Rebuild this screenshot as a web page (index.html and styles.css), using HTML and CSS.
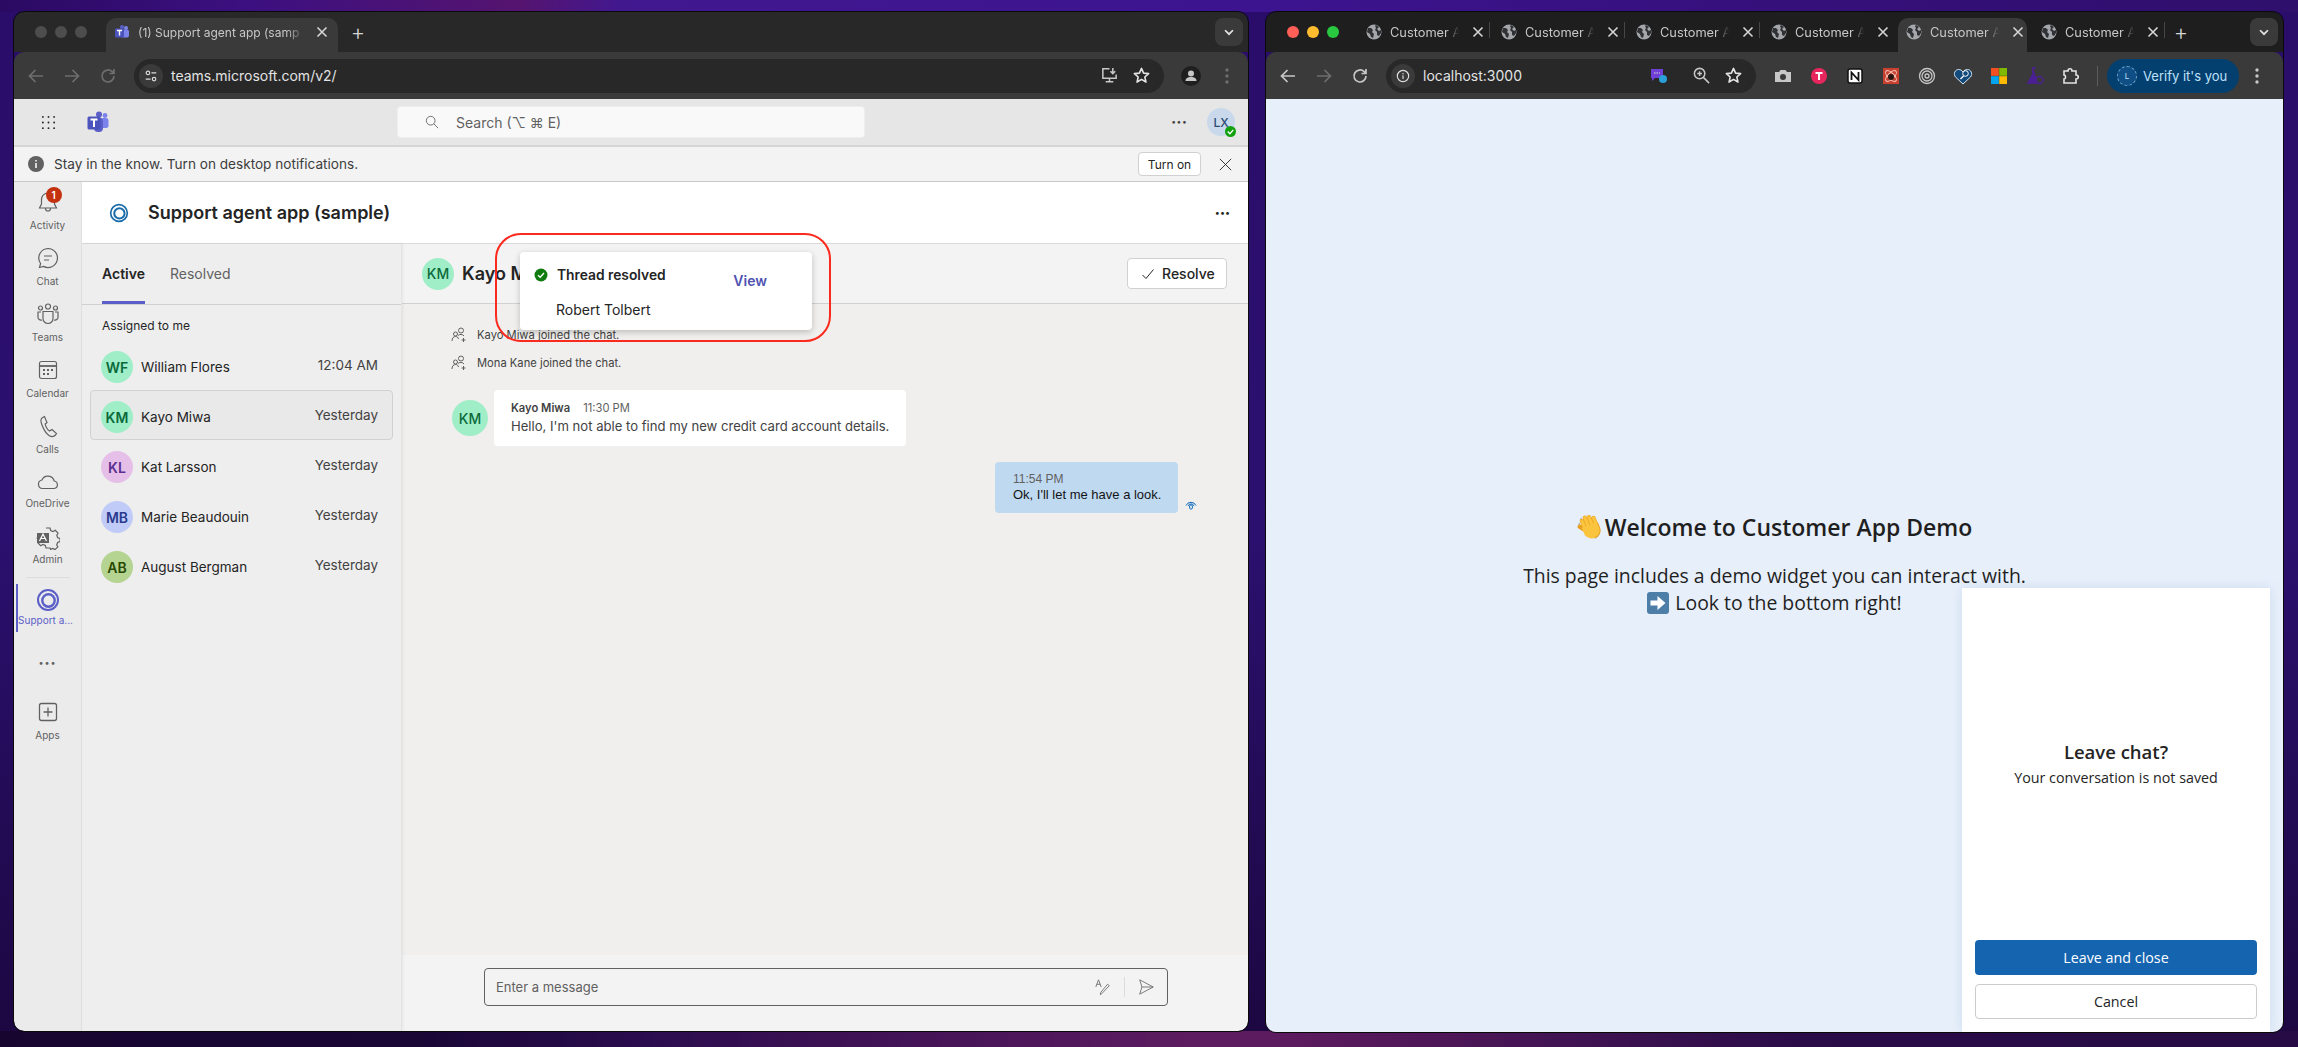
FILE: index.html
```html
<!DOCTYPE html>
<html lang="en">
<head>
<meta charset="UTF-8">
<title>Support agent app (sample)</title>
<link rel="stylesheet" href="styles.css">
</head>
<body>
<svg class="defs" width="0" height="0">
  <symbol id="globe" viewBox="0 0 16 16">
    <circle cx="8" cy="8" r="7.500" fill="#a3a7ab"/>
    <path d="M2 4l3 0 2 2-1 2 2 2-1 4-2-1-1-3-3-2zM10 1l3 2-2 2 2 2 2-1 0 3-2 3-2-1 0-3-2-2 1-2-1-2z" fill="#303134"/>
  </symbol>
  <symbol id="close" viewBox="0 0 16 16">
    <path d="M3.500 3.500l9 9M12.500 3.500l-9 9" fill="none" stroke="currentColor" stroke-width="1.600"/>
  </symbol>
  <symbol id="star" viewBox="0 0 20 20">
    <path d="M10 2.500l2.200 5 5.300.5-4 3.600 1.200 5.300L10 14.100l-4.700 2.800 1.200-5.300-4-3.600 5.300-.5z" fill="none" stroke="currentColor" stroke-width="1.700" stroke-linejoin="round"/>
  </symbol>
  <symbol id="back" viewBox="0 0 20 20">
    <path d="M17 10H4M9.500 4L3.500 10l6 6" fill="none" stroke="currentColor" stroke-width="1.700"/>
  </symbol>
  <symbol id="forward" viewBox="0 0 20 20">
    <path d="M3 10h13M10.500 4l6 6-6 6" fill="none" stroke="currentColor" stroke-width="1.700"/>
  </symbol>
  <symbol id="reload" viewBox="0 0 20 20">
    <path d="M16 10a6 6 0 1 1-1.800-4.300L16 7.500M16 3v4.500h-4.500" fill="none" stroke="currentColor" stroke-width="1.700"/>
  </symbol>
  <symbol id="kebab" viewBox="0 0 20 20">
    <circle cx="10" cy="4" r="1.700" fill="currentColor"/><circle cx="10" cy="10" r="1.700" fill="currentColor"/><circle cx="10" cy="16" r="1.700" fill="currentColor"/>
  </symbol>
  <symbol id="chevron" viewBox="0 0 16 16">
    <path d="M3.500 6l4.500 4.500L12.500 6" fill="none" stroke="currentColor" stroke-width="2"/>
  </symbol>
  <symbol id="joined" viewBox="0 0 16 16">
    <circle cx="10" cy="3.500" r="2.500" fill="none" stroke="#616161"/>
    <circle cx="4.500" cy="7" r="2" fill="none" stroke="#616161"/>
    <path d="M1 14c0-3 1.500-4.500 3.500-4.500S7 10.500 7.500 12M7 8.500c1-1.500 5-1.500 6 0.500M12.500 11v4M10.500 13h4" fill="none" stroke="#616161"/>
  </symbol>
  <symbol id="ring" viewBox="0 0 24 24">
    <circle cx="12" cy="12" r="10" fill="none" stroke="currentColor" stroke-width="2"/>
    <circle cx="12.500" cy="12.500" r="6.200" fill="none" stroke="currentColor" stroke-width="2.400"/>
  </symbol>
</svg>

<div class="window window-teams">
  <div class="tabstrip">
    <div class="lights"><i class="light"></i><i class="light"></i><i class="light"></i></div>
    <div class="tab tab-single">
      <svg class="tab-icon" viewBox="0 0 16 16"><circle cx="12" cy="4" r="2" fill="#7b83eb"/><circle cx="8" cy="3" r="2" fill="#5b5fc7"/><rect x="7" y="5.500" width="8" height="8" rx="2" fill="#7b83eb"/><rect x="1" y="4.500" width="9" height="9" rx="1" fill="#4b53bc"/><path d="M3 6.500h5M5.500 6.500v5" stroke="#fff" stroke-width="1.400"/></svg>
      <span class="tab-title">(1) Support agent app (samp</span>
      <svg class="tab-close"><use href="#close"/></svg>
    </div>
    <span class="tab-plus">+</span>
    <span class="tab-menu"><svg><use href="#chevron"/></svg></span>
  </div>
  <div class="toolbar">
    <span class="tool dim"><svg><use href="#back"/></svg></span>
    <span class="tool dim"><svg><use href="#forward"/></svg></span>
    <span class="tool dim"><svg><use href="#reload"/></svg></span>
    <div class="address address-teams">
      <span class="site-chip">
        <svg viewBox="0 0 16 16"><circle cx="4.500" cy="4.500" r="2" fill="none" stroke="#ddd" stroke-width="1.300"/><path d="M8.500 4.500H14M2 11.500h5.500" stroke="#ddd" stroke-width="1.300"/><circle cx="11.500" cy="11.500" r="2" fill="none" stroke="#ddd" stroke-width="1.300"/></svg>
      </span>
      <span class="url">teams.microsoft.com/v2/</span>
      <span class="address-end">
        <span class="tool-sm"><svg viewBox="0 0 20 20"><path d="M10 3H3v10h14V9M6 16.500h8M10 13v3.500M13.500 2v6M11 5.500l2.500 2.500L16 5.500" fill="none" stroke="#c7c7c7" stroke-width="1.600"/></svg></span>
        <span class="tool-sm"><svg><use href="#star"/></svg></span>
      </span>
    </div>
    <span class="tool person"><svg viewBox="0 0 20 20"><circle cx="10" cy="10" r="10" fill="#1f1f1f"/><circle cx="10" cy="7.500" r="3" fill="#c7c7c7"/><path d="M4.500 15c0-3 2.500-4 5.500-4s5.500 1 5.500 4z" fill="#c7c7c7"/></svg></span>
    <span class="tool dim"><svg><use href="#kebab"/></svg></span>
  </div>

  <div class="teams">
    <div class="topbar">
      <div class="topbar-left">
        <svg class="waffle" viewBox="0 0 16 16" fill="#242424"><circle cx="2" cy="2" r="1"/><circle cx="8" cy="2" r="1"/><circle cx="14" cy="2" r="1"/><circle cx="2" cy="8" r="1"/><circle cx="8" cy="8" r="1"/><circle cx="14" cy="8" r="1"/><circle cx="2" cy="14" r="1"/><circle cx="8" cy="14" r="1"/><circle cx="14" cy="14" r="1"/></svg>
        <svg class="teams-logo" viewBox="0 0 22 22"><circle cx="18" cy="4.500" r="2.400" fill="#7b83eb"/><circle cx="12" cy="3.500" r="3" fill="#5b5fc7"/><rect x="10" y="7" width="11.500" height="10" rx="2.500" fill="#7b83eb"/><rect x="7" y="7" width="9" height="14" rx="4" fill="#5b5fc7"/><rect x="0.500" y="5.500" width="13" height="13" rx="1.500" fill="#4b53bc"/><path d="M3.500 8.500h7M7 8.500v7.500" stroke="#fff" stroke-width="2"/></svg>
      </div>
      <div class="search">
        <svg viewBox="0 0 16 16"><circle cx="6.500" cy="6.500" r="5" fill="none" stroke="#616161"/><path d="M10 10l5 5" stroke="#616161"/></svg>
        <span>Search (⌥ ⌘ E)</span>
      </div>
      <div class="topbar-right">
        <span class="top-dots">···</span>
        <span class="me">LX<i class="me-status"><svg viewBox="0 0 10 10"><path d="M2.500 5l2 2 3-3.500" fill="none" stroke="#fff" stroke-width="1.200"/></svg></i></span>
      </div>
    </div>

    <div class="banner">
      <svg class="banner-icon" viewBox="0 0 16 16"><circle cx="8" cy="8" r="8" fill="#616161"/><path d="M8 7v5M8 4v1.500" stroke="#fff" stroke-width="1.500"/></svg>
      <span class="banner-text">Stay in the know. Turn on desktop notifications.</span>
      <button class="banner-btn">Turn on</button>
      <svg class="banner-close" viewBox="0 0 16 16"><path d="M1 1l14 14M15 1L1 15" fill="none" stroke="#242424" stroke-width="1.100"/></svg>
    </div>

    <div class="workspace">
      <nav class="rail">
        <div class="rail-item">
          <span class="rail-icon">
            <svg viewBox="0 0 24 24" fill="none" stroke="#616161" stroke-width="1.200"><path d="M12 3a6.500 6.500 0 0 0-6.500 6.500V14L3.500 18h17l-2-4V9.500A6.500 6.500 0 0 0 12 3zM9.500 18.500a2.500 2.500 0 0 0 5 0"/></svg>
            <b class="badge">1</b>
          </span>
          <span class="rail-label">Activity</span>
        </div>
        <div class="rail-item">
          <span class="rail-icon"><svg viewBox="0 0 24 24" fill="none" stroke="#616161" stroke-width="1.200"><path d="M12 2.500a9.500 9.500 0 1 1-4.500 17.900L3.500 21.500l1.100-4A9.500 9.500 0 0 1 12 2.500zM8 10h8M8 14h5"/></svg></span>
          <span class="rail-label">Chat</span>
        </div>
        <div class="rail-item">
          <span class="rail-icon"><svg viewBox="0 0 24 24" fill="none" stroke="#616161" stroke-width="1.200"><circle cx="12" cy="4.500" r="2.500"/><circle cx="4.500" cy="6" r="2"/><circle cx="19.500" cy="6" r="2"/><path d="M7 9.500h10v7a5 5 0 0 1-10 0zM5 10H2v5a3 3 0 0 0 4 3M19 10h3v5a3 3 0 0 1-4 3"/></svg></span>
          <span class="rail-label">Teams</span>
        </div>
        <div class="rail-item">
          <span class="rail-icon"><svg viewBox="0 0 24 24" fill="none" stroke="#616161" stroke-width="1.200"><rect x="3.500" y="3.500" width="17" height="17" rx="2"/><path d="M3.500 8h17" stroke-width="1.800"/><path d="M7 12h2M11 12h2M15 12h2M7 16h2M11 16h2" stroke-width="1.800"/></svg></span>
          <span class="rail-label">Calendar</span>
        </div>
        <div class="rail-item">
          <span class="rail-icon"><svg viewBox="0 0 24 24" fill="none" stroke="#616161" stroke-width="1.200"><path d="M8.500 2.500L6 4c-1.500 1-1.500 3 0 7s4 8.500 7 10.500c2.500 1.500 5 1.200 6.500-.5l1-1.500-4.500-4-2.500 1.500c-2-1-4-4.500-4.300-7L11 8.500z"/></svg></span>
          <span class="rail-label">Calls</span>
        </div>
        <div class="rail-item rail-tight">
          <span class="rail-icon"><svg viewBox="0 0 24 24" fill="none" stroke="#616161" stroke-width="1.200"><path d="M6.500 18.500a4.300 4.300 0 0 1-.6-8.500 6.500 6.500 0 0 1 12.300 1 3.800 3.800 0 0 1 0 7.500z"/></svg></span>
          <span class="rail-label">OneDrive</span>
        </div>
        <div class="rail-item rail-tight rail-last">
          <span class="rail-icon"><svg viewBox="0 0 24 24" fill="none" stroke="#616161" stroke-width="1.200"><path d="M10 2h4l.7 2.500 2.300 1 2.300-1.200 2.700 2.900-1.200 2.200.9 2.300 2.300.8v3l-2.300.9-1 2.300 1.100 2.200-2.800 2.700-2.200-1.200-2.300 1L14 22h-4l-.7-2.500-2.300-1-2.300 1.200L2 17l1.200-2.300-1-2.300L0.500 12"/><rect x="1" y="7" width="12" height="10" fill="#616161" stroke="none"/><path d="M3.500 15l3.500-7 3.500 7M5 12.500h4" stroke="#fff"/></svg></span>
          <span class="rail-label">Admin</span>
        </div>
        <div class="rail-divider"></div>
        <div class="rail-item rail-active">
          <span class="rail-icon"><svg><use href="#ring"/></svg></span>
          <span class="rail-label">Support a...</span>
        </div>
        <div class="rail-more">•••</div>
        <div class="rail-item">
          <span class="rail-icon"><svg viewBox="0 0 24 24" fill="none" stroke="#616161" stroke-width="1.300"><rect x="3.500" y="3.500" width="17" height="17" rx="2"/><path d="M12 7.500v9M7.500 12h9"/></svg></span>
          <span class="rail-label">Apps</span>
        </div>
      </nav>

      <main class="stage">
        <header class="app-head">
          <svg class="app-logo"><use href="#ring"/></svg>
          <h1 class="app-title">Support agent app (sample)</h1>
          <span class="app-more">•••</span>
        </header>
        <div class="panes">
          <aside class="threads">
            <div class="thread-tabs">
              <span class="thread-tab thread-tab-on">Active</span>
              <span class="thread-tab">Resolved</span>
            </div>
            <div class="thread-group">Assigned to me</div>
            <div class="thread">
              <span class="who"><span class="avatar av-green">WF</span><span>William Flores</span></span>
              <span class="when">12:04 AM</span>
            </div>
            <div class="thread thread-on">
              <span class="who"><span class="avatar av-green">KM</span><span>Kayo Miwa</span></span>
              <span class="when">Yesterday</span>
            </div>
            <div class="thread">
              <span class="who"><span class="avatar av-pink">KL</span><span>Kat Larsson</span></span>
              <span class="when">Yesterday</span>
            </div>
            <div class="thread">
              <span class="who"><span class="avatar av-blue">MB</span><span>Marie Beaudouin</span></span>
              <span class="when">Yesterday</span>
            </div>
            <div class="thread">
              <span class="who"><span class="avatar av-olive">AB</span><span>August Bergman</span></span>
              <span class="when">Yesterday</span>
            </div>
          </aside>
          <section class="chat">
            <div class="chat-head">
              <span class="avatar av-mint">KM</span>
              <span class="chat-name">Kayo Miwa</span>
              <button class="resolve">
                <svg viewBox="0 0 14 14"><path d="M1.500 8l3.500 3.500 7.500-9" fill="none" stroke="#242424" stroke-width="1"/></svg>
                Resolve
              </button>
            </div>
            <div class="messages">
              <div class="sys"><svg><use href="#joined"/></svg>Kayo Miwa joined the chat.</div>
              <div class="sys"><svg><use href="#joined"/></svg>Mona Kane joined the chat.</div>
              <div class="msg-in">
                <span class="avatar avatar-lg av-mint">KM</span>
                <div class="bubble-in">
                  <div class="msg-meta"><b>Kayo Miwa</b><span>11:30 PM</span></div>
                  <div class="msg-body">Hello, I'm not able to find my new credit card account details.</div>
                </div>
              </div>
              <div class="msg-out">
                <div class="bubble-out">
                  <div class="out-time">11:54 PM</div>
                  <div>Ok, I'll let me have a look.</div>
                </div>
                <svg class="seen" viewBox="0 0 12 12"><path d="M1 6.500a5.500 5.500 0 0 1 10 0M3 7a3.200 3.200 0 0 1 6 0" fill="none" stroke="#0f6cbd"/><ellipse cx="6" cy="8" rx="1.500" ry="2.200" fill="none" stroke="#0f6cbd"/></svg>
              </div>
            </div>
            <div class="composer">
              <div class="composer-box">
                <span class="composer-hint">Enter a message</span>
                <svg class="composer-icon" viewBox="0 0 20 20"><path d="M2 10L5 2l3 8M3 7h4M9 17l-2 1.500.5-2.500L15 7l2 1.500z" fill="none" stroke="#616161" stroke-width=".9"/></svg>
                <i class="composer-sep"></i>
                <svg class="composer-icon" viewBox="0 0 20 20"><path d="M3 2l15 8-15 8 2.500-8zM5.500 10H18" fill="none" stroke="#616161" stroke-width=".9"/></svg>
              </div>
            </div>
          </section>
        </div>
      </main>
    </div>
  </div>

  <div class="callout">
    <div class="toast">
      <div class="toast-top">
        <svg class="toast-check" viewBox="0 0 14 14"><circle cx="7" cy="7" r="6.500" fill="#107c10"/><path d="M4 7.200l2.200 2.100L10 5" fill="none" stroke="#fff" stroke-width="1.300"/></svg>
        <b class="toast-title">Thread resolved</b>
        <span class="toast-link">View</span>
      </div>
      <div class="toast-name">Robert Tolbert</div>
    </div>
  </div>
</div>

<div class="window window-customer">
  <div class="tabstrip">
    <div class="lights"><i class="light light-red"></i><i class="light light-amber"></i><i class="light light-green"></i></div>
    <div class="tab-row">
      <div class="tab-cell"><svg class="tab-icon"><use href="#globe"/></svg><span class="tab-title">Customer A</span><svg class="tab-close"><use href="#close"/></svg></div>
      <div class="tab-cell"><svg class="tab-icon"><use href="#globe"/></svg><span class="tab-title">Customer A</span><svg class="tab-close"><use href="#close"/></svg></div>
      <div class="tab-cell"><svg class="tab-icon"><use href="#globe"/></svg><span class="tab-title">Customer A</span><svg class="tab-close"><use href="#close"/></svg></div>
      <div class="tab-cell tab-cell-plain"><svg class="tab-icon"><use href="#globe"/></svg><span class="tab-title">Customer A</span><svg class="tab-close"><use href="#close"/></svg></div>
      <div class="tab-cell tab-cell-on"><svg class="tab-icon"><use href="#globe"/></svg><span class="tab-title">Customer A</span><svg class="tab-close"><use href="#close"/></svg></div>
      <div class="tab-cell"><svg class="tab-icon"><use href="#globe"/></svg><span class="tab-title">Customer A</span><svg class="tab-close"><use href="#close"/></svg></div>
    </div>
    <span class="tab-plus tab-plus-right">+</span>
    <span class="tab-menu"><svg><use href="#chevron"/></svg></span>
  </div>
  <div class="toolbar">
    <span class="tool"><svg><use href="#back"/></svg></span>
    <span class="tool dim"><svg><use href="#forward"/></svg></span>
    <span class="tool"><svg><use href="#reload"/></svg></span>
    <div class="address address-customer">
      <span class="site-chip">
        <svg viewBox="0 0 16 16"><circle cx="8" cy="8" r="6.500" fill="none" stroke="#ddd" stroke-width="1.300"/><path d="M8 7v4.500M8 4.500V6" stroke="#ddd" stroke-width="1.300"/></svg>
      </span>
      <span class="url">localhost:3000</span>
      <span class="address-end">
        <svg class="ext-chat" viewBox="0 0 18 16"><path d="M1 1h12v9H5l-3 3v-3H1z" fill="#6f3fd6"/><circle cx="13" cy="11" r="4" fill="#2b9fd8"/><path d="M4 5h6" stroke="#ddd" stroke-dasharray="1.500 1"/></svg>
        <span class="tool-sm"><svg viewBox="0 0 20 20"><circle cx="8" cy="8" r="5.500" fill="none" stroke="#c7c7c7" stroke-width="1.600"/><path d="M12 12l6 6M8 5.500v5M5.500 8h5" stroke="#c7c7c7" stroke-width="1.600"/></svg></span>
        <span class="tool-sm"><svg><use href="#star"/></svg></span>
      </span>
    </div>
    <span class="tool tool-first"><svg viewBox="0 0 20 20"><path d="M2 6h4l1.500-2h5L14 6h4v10H2z" fill="#c7c7c7"/><circle cx="10" cy="11" r="3" fill="#3a3a3a"/></svg></span>
    <span class="tool"><svg viewBox="0 0 20 20"><circle cx="10" cy="10" r="8" fill="#e8265e"/><path d="M6.500 7h7M10 7v7" stroke="#fff" stroke-width="2"/></svg></span>
    <span class="tool"><svg viewBox="0 0 20 20"><rect x="3" y="3" width="14" height="14" rx="2" fill="#fff" stroke="#111" stroke-width="1.500"/><path d="M6.500 14V6.500l7 7.500V6" fill="none" stroke="#111" stroke-width="1.800"/></svg></span>
    <span class="tool"><svg viewBox="0 0 20 20"><rect x="2" y="2" width="16" height="16" fill="#c8402f"/><ellipse cx="10" cy="10" rx="7" ry="3" fill="none" stroke="#f6c9bf" transform="rotate(45 10 10)"/><ellipse cx="10" cy="10" rx="7" ry="3" fill="none" stroke="#f6c9bf" transform="rotate(-45 10 10)"/><circle cx="10" cy="11" r="3" fill="#2a1512"/></svg></span>
    <span class="tool"><svg viewBox="0 0 20 20" fill="none" stroke="#c7c7c7" stroke-width="1.300"><circle cx="10" cy="10" r="7.500"/><circle cx="10" cy="10" r="5"/><circle cx="10" cy="10" r="2"/></svg></span>
    <span class="tool"><svg viewBox="0 0 20 20"><path d="M10 18L2.500 11C0 8 2 3.500 5.500 3.500c2 0 3.500 1 4.500 2.500 1-1.500 2.500-2.500 4.500-2.500C18 3.500 20 8 17.500 11z" fill="#134a7c" stroke="#d5e4f2"/><circle cx="12.500" cy="7.500" r="2.800" fill="#134a7c" stroke="#fff"/><path d="M10.500 10l-3 3" stroke="#fff" stroke-width="1.300"/></svg></span>
    <span class="tool"><svg viewBox="0 0 20 20"><rect x="2" y="2" width="7.800" height="7.800" fill="#f25022"/><rect x="10.200" y="2" width="7.800" height="7.800" fill="#7fba00"/><rect x="2" y="10.200" width="7.800" height="7.800" fill="#00a4ef"/><rect x="10.200" y="10.200" width="7.800" height="7.800" fill="#ffb900"/></svg></span>
    <span class="tool"><svg viewBox="0 0 20 20"><path d="M7 2h4M8 2v6L3 17h10" fill="#4b1f94" stroke="#4b1f94" stroke-width="1.500"/><circle cx="14.500" cy="14" r="3.500" fill="none" stroke="#4b1f94" stroke-width="1.400"/></svg></span>
    <span class="tool"><svg viewBox="0 0 20 20"><path d="M3 5h4c0-3 4-3 4 0h4v4c3 0 3 4 0 4v4H3v-4c2 0 2-4 0-4z" fill="none" stroke="#e3e3e3" stroke-width="1.600"/></svg></span>
    <i class="tool-sep"></i>
    <div class="verify">
      <span class="verify-mark">L</span>
      <span>Verify it's you</span>
    </div>
    <span class="tool"><svg><use href="#kebab"/></svg></span>
  </div>
  <div class="page">
    <h2 class="page-title">
      <svg class="emoji-hand" viewBox="0 0 24 26">
        <path d="M1.500 13l1-4M3.500 6l1-2M22 19l-1 3M19 23l-1 1.500" stroke="#a7aeb6" stroke-width="1.200" fill="none"/>
        <g transform="rotate(-22 13 14)">
          <path d="M7 13l-3-4" stroke="#e8a020" stroke-width="4.400" stroke-linecap="round"/>
          <path d="M8 13V4.500M12 12V2.500M16 12V3.500M20 13V6" stroke="#e8a020" stroke-width="4.200" stroke-linecap="round"/>
          <path d="M8 13V4.500M12 12V2.500M16 12V3.500M20 13V6" stroke="#fbc43f" stroke-width="3.300" stroke-linecap="round"/>
          <path d="M5.500 11h16.500v6c0 5-3.500 8-8 8-4 0-6-2-8.500-6z" fill="#fbc43f"/>
          <path d="M14 25c4 0 8-3 8-8v-5" fill="none" stroke="#e8a020"/>
        </g>
      </svg>
      Welcome to Customer App Demo
    </h2>
    <p class="page-text">This page includes a demo widget you can interact with.</p>
    <p class="page-text">
      <svg class="emoji-arrow" viewBox="0 0 22 22"><rect width="22" height="22" rx="3" fill="#4d7ea8"/><path d="M3.500 8.500h7V4l8 7-8 7v-4.500h-7z" fill="#fff"/></svg>
      Look to the bottom right!
    </p>
    <aside class="widget">
      <div class="widget-title">Leave chat?</div>
      <div class="widget-sub">Your conversation is not saved</div>
      <button class="widget-btn widget-btn-main">Leave and close</button>
      <button class="widget-btn">Cancel</button>
    </aside>
  </div>
</div>
</body>
</html>
```

FILE: styles.css
```css
*{
    box-sizing: border-box;
}
html, body{
    margin: 0;
    height: 100%;
}
body{
    position: relative;
    width: 2298px;
    height: 1047px;
    overflow: hidden;
    font-family: Inter, "Liberation Sans", sans-serif;
    background:
        linear-gradient(90deg, #2a0a62 0, #3c1080 250px, #55146f 520px, #42188f 620px, #3c1490 1250px, #35107a 1800px, #2f0f6c 2298px) top / 100% 12px no-repeat,
        linear-gradient(90deg, #17052f 0, #1a0736 420px, #2a0c4e 640px, #5e1c60 1200px, #5c1b5e 1290px, #2a0c48 1800px, #260b44 2298px) bottom / 100% 16px no-repeat,
        linear-gradient(180deg, #2a0d6a 0, #2c1070 50%, #1c0740 100%);
}
.defs{
    position: absolute;
}
svg{
    display: block;
}
button{
    font-family: inherit;
    cursor: pointer;
}

/* desktop windows */
.window{
    position: absolute;
    top: 12px;
    display: flex;
    flex-direction: column;
    border-radius: 10px;
    overflow: hidden;
    outline: 1px solid #0a0a0a;
}
.window-teams{
    left: 14px;
    width: 1234px;
    height: 1019px;
    --strip: #282828;
}
.window-customer{
    left: 1266px;
    width: 1017px;
    height: 1020px;
    --strip: #1e1e1e;
}

/* browser chrome */
.tabstrip{
    display: flex;
    align-items: flex-end;
    flex: none;
    height: 40px;
    padding: 0 5px 0 21px;
    background: var(--strip);
    color: #c7c7c7;
    font-size: 14px;
}
.lights{
    display: flex;
    align-self: center;
    gap: 8px;
}
.light{
    width: 12px;
    height: 12px;
    border-radius: 50%;
    background: #4d4d4d;
}
.light-red{ background: #ff5f57; }
.light-amber{ background: #febc2e; }
.light-green{ background: #28c840; }
.tab{
    display: flex;
    align-items: center;
    gap: 8px;
    height: 34px;
    padding: 0 8px 6px;
    border-radius: 10px 10px 0 0;
    background: #3a3a3a;
}
.tab-single{
    width: 232px;
    margin-left: 19px;
}
.tab-icon{
    flex: none;
    width: 16px;
    height: 16px;
}
.tab-title{
    flex: 1;
    min-width: 0;
    overflow: hidden;
    white-space: nowrap;
    font-size: 12px;
    -webkit-mask-image: linear-gradient(90deg, #000 88%, transparent 100%);
    mask-image: linear-gradient(90deg, #000 88%, transparent 100%);
}
.tab-cell .tab-title{
    font-size: 12.800px;
    flex: none;
    width: 72px;
    -webkit-mask-image: linear-gradient(90deg, #000 78%, transparent 96%);
    mask-image: linear-gradient(90deg, #000 78%, transparent 96%);
}
.tab-close{
    flex: none;
    width: 16px;
    height: 16px;
    color: #d5d5d5;
}
.tab-plus{
    align-self: center;
    width: 20px;
    margin-left: 10px;
    text-align: center;
    font-size: 22px;
    line-height: 24px;
    font-weight: 300;
    color: #d5d5d5;
}
.tab-plus-right{
    margin-left: 6px;
}
.tab-menu{
    display: flex;
    align-items: center;
    justify-content: center;
    width: 28px;
    height: 28px;
    margin: 0 0 6px auto;
    border-radius: 8px;
    background: #3a3a3a;
}
.tab-menu svg{
    width: 14px;
    height: 14px;
    color: #e3e3e3;
}
.tab-row{
    display: flex;
    margin-left: 16px;
}
.tab-cell{
    display: flex;
    align-items: center;
    gap: 8px;
    width: 135px;
    height: 34px;
    padding: 0 11px 6px;
    background: linear-gradient(#47474a, #47474a) right 4px / 1px 16px no-repeat;
}
.tab-cell-plain{
    background: none;
}
.tab-cell-on{
    background: #3a3a3a;
    width: 129px;
    margin: 0 3px;
    padding: 0 8px 6px;
    border-radius: 10px 10px 0 0;
}
.toolbar{
    display: flex;
    align-items: center;
    flex: none;
    height: 47px;
    padding: 0 3px 0 4px;
    border-radius: 10px 10px 0 0;
    background: #3a3a3a;
    color: #c7c7c7;
}
.tool{
    display: flex;
    align-items: center;
    justify-content: center;
    flex: none;
    width: 36px;
    height: 34px;
}
.tool svg{
    width: 20px;
    height: 20px;
}
.tool.dim{
    color: #6e6e6e;
}
.tool-first{
    margin-left: 9px;
}
.tool-sm{
    display: flex;
    align-items: center;
    justify-content: center;
    width: 32px;
    height: 34px;
}
.tool-sm svg{
    width: 19px;
    height: 19px;
}
.tool-sep{
    width: 1px;
    height: 20px;
    margin: 0 9px 0 8px;
    background: #5c5c5c;
}
.address{
    display: flex;
    align-items: center;
    gap: 8px;
    height: 34px;
    margin-left: 8px;
    padding: 0 7px 0 5px;
    border-radius: 17px;
    background: #282828;
    color: #e3e3e3;
    font-size: 14px;
}
.address-teams{
    width: 1030px;
    margin-right: 9px;
}
.address-customer{
    width: 370px;
}
.site-chip{
    display: flex;
    align-items: center;
    justify-content: center;
    width: 24px;
    height: 24px;
    border-radius: 50%;
    background: #3a3a3a;
}
.site-chip svg{
    width: 14px;
    height: 14px;
}
.address-end{
    display: flex;
    align-items: center;
    margin-left: auto;
}
.ext-chat{
    width: 18px;
    height: 16px;
    margin-right: 17px;
}
.verify{
    display: flex;
    align-items: center;
    gap: 6px;
    width: 132px;
    height: 34px;
    padding-left: 10px;
    border-radius: 17px;
    background: #04406f;
    color: #bfe0fa;
    font-size: 13px;
    white-space: nowrap;
}
.verify-mark{
    display: flex;
    align-items: center;
    justify-content: center;
    flex: none;
    width: 20px;
    height: 20px;
    border-radius: 50%;
    border: 1px dashed #7fa8c9;
    background: #0f4f86;
    font-size: 8px;
}

/* teams app */
.teams{
    display: flex;
    flex-direction: column;
    flex: 1;
    min-height: 0;
    color: #242424;
    font-size: 13.500px;
}
.topbar{
    display: grid;
    grid-template-columns: 1fr 468px 1fr;
    align-items: center;
    flex: none;
    height: 48px;
    background: #e6e6e6;
    border-bottom: 2px solid #d6d6d6;
}
.topbar-left{
    display: flex;
    align-items: center;
    padding-left: 27px;
    gap: 31px;
}
.waffle{
    width: 15px;
    height: 15px;
}
.teams-logo{
    width: 22px;
    height: 22px;
}
.search{
    display: flex;
    align-items: center;
    gap: 17px;
    height: 32px;
    padding-left: 27px;
    border: 1px solid #eee;
    border-radius: 4px;
    background: #f9f9f9;
    color: #616161;
    font-size: 14px;
}
.search svg{
    width: 14px;
    height: 14px;
}
.topbar-right{
    display: flex;
    align-items: center;
    justify-content: flex-end;
    gap: 20px;
    padding-right: 13px;
}
.top-dots{
    font-size: 16px;
    font-weight: 700;
    color: #424242;
}
.me{
    position: relative;
    display: flex;
    align-items: center;
    justify-content: center;
    width: 28px;
    height: 28px;
    border-radius: 50%;
    background: #c9d9eb;
    color: #2b4a75;
    font-size: 12px;
    font-weight: 500;
}
.me-status{
    position: absolute;
    right: -1px;
    bottom: -1px;
    width: 11px;
    height: 11px;
    border-radius: 50%;
    background: #13a10e;
}
.banner{
    display: flex;
    align-items: center;
    flex: none;
    height: 35px;
    padding-left: 14px;
    background: #f3f3f3;
    border-bottom: 1px solid #c9c9c9;
}
.banner-icon{
    width: 16px;
    height: 16px;
    margin-right: 10px;
}
.banner-text{
    color: #3d3d3d;
    font-size: 13.600px;
}
.banner-btn{
    width: 63px;
    height: 24px;
    margin-left: auto;
    padding: 0;
    border: 1px solid #d1d1d1;
    border-radius: 4px;
    background: #fff;
    color: #242424;
    font-size: 12px;
}
.banner-close{
    width: 13px;
    height: 13px;
    margin: 0 16px 0 18px;
}
.workspace{
    display: flex;
    flex: 1;
    min-height: 0;
}
.rail{
    display: flex;
    flex-direction: column;
    flex: none;
    width: 68px;
    padding-top: 4px;
    background: #ebebeb;
    border-right: 1px solid #e0e0e0;
}
.rail-item{
    display: flex;
    flex-direction: column;
    align-items: center;
    flex: none;
    height: 56px;
    padding-top: 4px;
    color: #616161;
}
.rail-icon{
    position: relative;
    display: block;
    width: 24px;
    height: 24px;
}
.rail-icon svg{
    width: 24px;
    height: 24px;
}
.rail-label{
    margin-top: 4px;
    font-size: 10px;
    line-height: 14px;
    white-space: nowrap;
}
.rail-tight .rail-label{
    margin-top: 2px;
}
.rail-last{
    height: 55px;
}
.badge{
    position: absolute;
    top: -3px;
    left: 10px;
    width: 16px;
    height: 16px;
    border-radius: 50%;
    background: #c4310f;
    color: #fff;
    font-size: 10px;
    line-height: 16px;
    text-align: center;
    font-weight: 600;
}
.rail-divider{
    flex: none;
    width: 44px;
    height: 1px;
    margin: 0 0 6px 12px;
    background: #dcdcdc;
}
.rail-active{
    height: 48px;
    border-left: 2px solid #5b5fc7;
    margin-left: 2px;
    padding-right: 4px;
    color: #5b5fc7;
}
.rail-active .rail-label{
    margin: 1px 0 0 -4px;
}
.rail-more{
    flex: none;
    height: 64px;
    line-height: 62px;
    text-align: center;
    font-size: 9px;
    letter-spacing: 1px;
    color: #616161;
}
.stage{
    display: flex;
    flex-direction: column;
    flex: 1;
    min-width: 0;
}
.app-head{
    display: flex;
    align-items: center;
    flex: none;
    height: 62px;
    padding: 0 18px 0 27px;
    background: #fff;
    border-bottom: 1px solid #d9d9d9;
}
.app-logo{
    width: 20px;
    height: 20px;
    color: #1a6ca8;
}
.app-title{
    margin: 0 0 0 19px;
    font-size: 18px;
    font-weight: 600;
}
.app-more{
    margin-left: auto;
    font-size: 9px;
    color: #242424;
}
.panes{
    display: flex;
    flex: 1;
    min-height: 0;
}
.threads{
    flex: none;
    width: 320px;
    background: #eeeeee;
    border-right: 1px solid #e4e4e4;
    box-shadow: 1px 0 3px rgba(0,0,0,.06);
    z-index: 1;
}
.thread-tabs{
    display: flex;
    gap: 25px;
    height: 61px;
    padding-left: 20px;
    border-bottom: 1px solid #d1d1d1;
    color: #616161;
    font-size: 14px;
}
.thread-tab{
    display: flex;
    align-items: center;
    height: 60px;
    margin-bottom: -1px;
    border-bottom: 3px solid transparent;
    padding-top: 2px;
}
.thread-tab-on{
    font-weight: 600;
    color: #242424;
    border-bottom-color: #5b5fc7;
}
.thread-group{
    padding: 13px 0 0 20px;
    margin-bottom: 6px;
    font-size: 12px;
    line-height: 16px;
}
.thread{
    display: flex;
    align-items: center;
    justify-content: space-between;
    height: 50px;
    margin: 0 8px;
    padding: 0 14px 0 10px;
    border: 1px solid transparent;
    border-radius: 4px;
}
.thread-on{
    background: #e9e9e9;
    border-color: #d1d1d1;
}
.who{
    display: flex;
    align-items: center;
    gap: 8px;
    margin-top: 4px;
}
.avatar{
    display: flex;
    align-items: center;
    justify-content: center;
    flex: none;
    width: 32px;
    height: 32px;
    border-radius: 50%;
    font-size: 14px;
    font-weight: 600;
}
.avatar-lg{
    width: 36px;
    height: 36px;
    font-size: 14px;
    font-weight: 500;
}
.av-green{ background: #a0eec8; color: #0b6a3b; }
.av-mint{ background: #a0eec8; color: #0b6a3b; font-weight: 500; }
.av-pink{ background: #e6bfe8; color: #5c2e91; }
.av-blue{ background: #c0ccf7; color: #2a3a8f; }
.av-olive{ background: #b5d491; color: #294903; }
.when{
    color: #424242;
}
.chat{
    display: grid;
    grid-template-rows: 60px 1fr 76px;
    flex: 1;
    min-width: 0;
    background: #f0efed;
}
.chat-head{
    display: flex;
    align-items: center;
    gap: 8px;
    padding: 0 21px 0 20px;
    background: #f3f3f3;
    border-bottom: 1px solid #d1d1d1;
}
.chat-name{
    font-size: 18px;
    font-weight: 600;
}
.resolve{
    display: flex;
    align-items: center;
    gap: 7px;
    width: 100px;
    height: 31px;
    margin-left: auto;
    padding: 0 0 0 13px;
    border: 1px solid #d1d1d1;
    border-radius: 4px;
    background: #fff;
    color: #242424;
    font-size: 14px;
    font-weight: 500;
}
.resolve svg{
    width: 14px;
    height: 14px;
}
.messages{
    display: flex;
    flex-direction: column;
    padding: 23px 51px 0 49px;
    overflow: hidden;
}
.sys{
    display: flex;
    align-items: center;
    gap: 10px;
    margin-bottom: 12px;
    font-size: 11.200px;
    line-height: 16px;
    color: #424242;
}
.sys svg{
    width: 16px;
    height: 16px;
}
.msg-in{
    display: flex;
    align-items: center;
    gap: 6px;
    margin: 7px 0 16px 1px;
}
.bubble-in{
    width: 412px;
    height: 56px;
    padding: 10px 0 0 17px;
    border-radius: 4px;
    background: #fff;
}
.msg-meta{
    display: flex;
    gap: 13px;
    font-size: 11.200px;
    line-height: 16px;
    color: #616161;
    margin-bottom: 1px;
}
.msg-meta b{
    font-weight: 600;
    color: #424242;
}
.msg-body{
    font-size: 13.100px;
    line-height: 18px;
    color: #424242;
    white-space: nowrap;
}
.msg-out{
    display: flex;
    align-items: flex-end;
    justify-content: flex-end;
    gap: 7px;
}
.bubble-out{
    width: 183px;
    height: 51px;
    padding: 10px 0 0 18px;
    border-radius: 4px;
    background: #bfd9f1;
    font-family: "Liberation Sans", sans-serif;
    font-size: 13px;
    line-height: 16px;
    color: #141414;
}
.out-time{
    font-size: 12px;
    line-height: 15px;
    color: #616161;
}
.seen{
    width: 12px;
    height: 12px;
    margin-bottom: 2px;
}
.composer{
    padding: 13px 80px 0 82px;
    background: #f3f3f3;
}
.composer-box{
    display: flex;
    align-items: center;
    height: 38px;
    padding: 0 12px 0 11px;
    border: 1px solid #616161;
    border-radius: 4px;
    background: #f3f3f3;
}
.composer-hint{
    margin-right: auto;
    font-size: 13px;
    color: #616161;
}
.composer-icon{
    width: 18px;
    height: 18px;
}
.composer-sep{
    width: 1px;
    height: 20px;
    margin: 0 12px;
    background: #dcdcdc;
}

/* annotation over the chat header */
.callout{
    position: absolute;
    left: 481px;
    top: 221px;
    width: 336px;
    height: 109px;
    padding: 17px 17px 10px 23px;
    border: 2px solid #fb2a1e;
    border-radius: 26px;
    color: #242424;
    font-size: 14px;
}
.toast{
    height: 78px;
    padding: 15px 0 0 14px;
    border-radius: 4px;
    background: #fff;
    box-shadow: 0 2px 6px rgba(0,0,0,.22);
}
.toast-top{
    display: flex;
    align-items: flex-start;
    gap: 9px;
    line-height: 16px;
}
.toast-check{
    width: 14px;
    height: 14px;
    margin-top: 1px;
}
.toast-title{
    font-size: 13.800px;
    font-weight: 600;
}
.toast-link{
    margin: 6px 45px 0 auto;
    color: #4f52b2;
    font-weight: 600;
}
.toast-name{
    margin: 13px 0 0 22px;
    line-height: 16px;
}

/* customer page */
.page{
    position: relative;
    flex: 1;
    min-height: 0;
    padding-top: 412px;
    background: #e7effa;
    font-family: "Open Sans", sans-serif;
    text-align: center;
    color: #1f1f1f;
}
.page-title{
    display: flex;
    align-items: center;
    justify-content: center;
    gap: 4px;
    margin: 0 0 19px;
    font-size: 23px;
    line-height: 32px;
    font-weight: 600;
}
.page-text{
    display: flex;
    align-items: center;
    justify-content: center;
    gap: 6px;
    margin: 0;
    font-size: 19.400px;
    line-height: 27px;
    font-weight: 500;
}
.emoji-hand{
    width: 24px;
    height: 26px;
}
.emoji-arrow{
    width: 22px;
    height: 22px;
}
.widget{
    position: absolute;
    right: 13px;
    bottom: 0;
    display: flex;
    flex-direction: column;
    width: 308px;
    height: 444px;
    padding: 150px 13px 13px;
    background: #fff;
    box-shadow: 0 0 10px rgba(120,160,210,.22);
    color: #242424;
}
.widget-title{
    font-size: 18.500px;
    line-height: 28px;
    font-weight: 600;
}
.widget-sub{
    margin: 2px 0 auto;
    font-size: 14.300px;
    line-height: 20px;
}
.widget-btn{
    height: 35px;
    border: 1px solid #ccc;
    border-radius: 4px;
    background: #fff;
    color: #242424;
    font-family: inherit;
    font-size: 14.300px;
    font-weight: 500;
}
.widget-btn-main{
    margin-bottom: 9px;
    border: none;
    background: #1464b0;
    color: #fff;
}
```
